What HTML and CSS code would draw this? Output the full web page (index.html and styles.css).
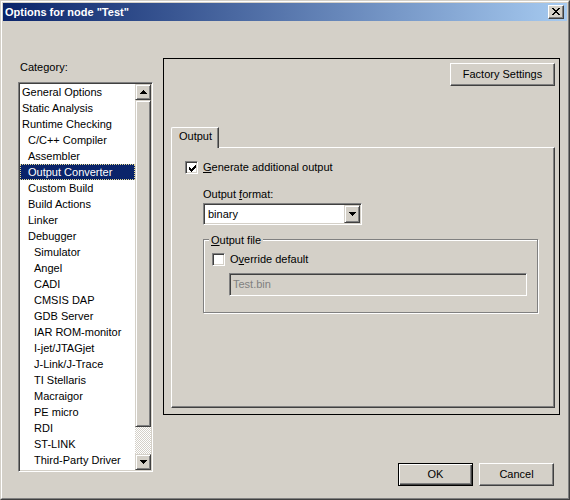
FILE: index.html
```html
<!DOCTYPE html>
<html>
<head>
<meta charset="utf-8">
<title>Options for node "Test"</title>
<link rel="stylesheet" href="styles.css">
</head>
<body>
<div class="window">
  <div class="frame">
    <div class="titlebar">
      <span class="title">Options for node "Test"</span>
      <div class="close">
        <svg width="8" height="7" viewBox="0 0 8 7" shape-rendering="crispEdges"><path fill="#000" d="M0 0h2v1h-2z M6 0h2v1h-2z M1 1h2v1h-2z M5 1h2v1h-2z M2 2h4v1h-4z M3 3h2v1h-2z M2 4h4v1h-4z M1 5h2v1h-2z M5 5h2v1h-2z M0 6h2v1h-2z M6 6h2v1h-2z"/></svg>
      </div>
    </div>
    <div class="client">
      <div class="left">
        <div class="cat-label">Category:</div>
        <div class="listbox">
          <div class="items">
            <div class="item l0">General Options</div>
            <div class="item l0">Static Analysis</div>
            <div class="item l0">Runtime Checking</div>
            <div class="item l1">C/C++ Compiler</div>
            <div class="item l1">Assembler</div>
            <div class="item l1 selected">Output Converter</div>
            <div class="item l1">Custom Build</div>
            <div class="item l1">Build Actions</div>
            <div class="item l1">Linker</div>
            <div class="item l1">Debugger</div>
            <div class="item l2">Simulator</div>
            <div class="item l2">Angel</div>
            <div class="item l2">CADI</div>
            <div class="item l2">CMSIS DAP</div>
            <div class="item l2">GDB Server</div>
            <div class="item l2">IAR ROM-monitor</div>
            <div class="item l2">I-jet/JTAGjet</div>
            <div class="item l2">J-Link/J-Trace</div>
            <div class="item l2">TI Stellaris</div>
            <div class="item l2">Macraigor</div>
            <div class="item l2">PE micro</div>
            <div class="item l2">RDI</div>
            <div class="item l2">ST-LINK</div>
            <div class="item l2">Third-Party Driver</div>
          </div>
          <div class="vscroll">
            <div class="sbtn">
              <svg width="7" height="4" viewBox="0 0 7 4" shape-rendering="crispEdges"><path fill="#000" d="M3 0h1v1h-1z M2 1h3v1h-3z M1 2h5v1h-5z M0 3h7v1h-7z"/></svg>
            </div>
            <div class="thumb"></div>
            <div class="track"></div>
            <div class="sbtn">
              <svg width="7" height="4" viewBox="0 0 7 4" shape-rendering="crispEdges"><path fill="#000" d="M0 0h7v1h-7z M1 1h5v1h-5z M2 2h3v1h-3z M3 3h1v1h-1z"/></svg>
            </div>
          </div>
        </div>
      </div>
      <div class="right">
        <div class="panel">
          <div class="panel-top">
            <div class="btn factory">Factory Settings</div>
          </div>
          <div class="tabs">
            <div class="tabstrip">
              <div class="tab">Output</div>
            </div>
            <div class="tabpage">
              <div class="check-row">
                <div class="checkbox">
                  <svg width="7" height="7" viewBox="0 0 7 7" shape-rendering="crispEdges"><path fill="#000" d="M6 0h1v1h-1z M5 1h2v1h-2z M0 2h1v1h-1z M4 2h3v1h-3z M0 3h2v1h-2z M3 3h3v1h-3z M0 4h5v1h-5z M1 5h3v1h-3z M2 6h1v1h-1z"/></svg>
                </div>
                <span class="lbl"><u>G</u>enerate additional output</span>
              </div>
              <div class="indent">
                <div class="fmt-label">Output <u>f</u>ormat:</div>
                <div class="combo">
                  <span class="combo-text">binary</span>
                  <div class="combo-btn">
                    <svg width="7" height="4" viewBox="0 0 7 4" shape-rendering="crispEdges"><path fill="#000" d="M0 0h7v1h-7z M1 1h5v1h-5z M2 2h3v1h-3z M3 3h1v1h-1z"/></svg>
                  </div>
                </div>
                <div class="group">
                  <div class="group-label"><u>O</u>utput file</div>
                  <div class="check-row override">
                    <div class="checkbox"></div>
                    <span class="lbl">O<u>v</u>erride default</span>
                  </div>
                  <div class="field">Test.bin</div>
                </div>
              </div>
            </div>
          </div>
        </div>
        <div class="footer">
          <div class="btn default">OK</div>
          <div class="btn">Cancel</div>
        </div>
      </div>
    </div>
  </div>
</div>
</body>
</html>
```

FILE: styles.css
```css
* {
  box-sizing: border-box;
}

html, body {
  margin: 0;
  padding: 0;
  background: #d4d0c8;
}

body {
  font-family: "Liberation Sans", Arial, sans-serif;
  font-size: 11px;
  line-height: 13px;
  color: #000;
}

.window {
  width: 570px;
  height: 500px;
  border: 1px solid;
  border-color: #d4d0c8 #404040 #404040 #d4d0c8;
  background: #d4d0c8;
}

.frame {
  height: 100%;
  border: 1px solid;
  border-color: #fff #808080 #808080 #fff;
  padding: 1px;
  display: flex;
  flex-direction: column;
}

.titlebar {
  height: 18px;
  flex: none;
  background: linear-gradient(to right, #0a246a, #a6caf0);
  display: flex;
  align-items: center;
  justify-content: space-between;
  padding: 0 3px 0 2px;
}

.title {
  color: #fff;
  font-weight: bold;
  font-size: 11px;
  line-height: 13px;
}

.close {
  width: 16px;
  height: 14px;
  background: #d4d0c8;
  border: 1px solid;
  border-color: #fff #404040 #404040 #fff;
  box-shadow: inset -1px -1px 0 #808080;
  display: flex;
  align-items: center;
  justify-content: center;
  padding: 0 0 1px 0;
}

.client {
  flex: 1;
  display: flex;
  padding-left: 15px;
}

.left {
  width: 135px;
  padding-top: 40px;
}

.cat-label {
  height: 13px;
  padding-left: 2px;
}

.listbox {
  margin-top: 8px;
  height: 390px;
  display: flex;
  background: #fff;
  border: 1px solid;
  border-color: #808080 #fff #fff #808080;
  box-shadow: inset 1px 1px 0 #404040, inset -1px -1px 0 #d4d0c8;
  padding: 1px;
}

.items {
  flex: 1;
  overflow: hidden;
}

.item {
  height: 16px;
  line-height: 14px;
  border: 1px solid transparent;
  white-space: nowrap;
}

.item.l0 { padding-left: 1px; }
.item.l1 { padding-left: 7px; }
.item.l2 { padding-left: 13px; }

.item.selected {
  background: #0a246a;
  color: #fff;
  border: 1px dotted #e8dc90;
}

.vscroll {
  width: 16px;
  display: flex;
  flex-direction: column;
}

.sbtn {
  height: 16px;
  flex: none;
  background: #d4d0c8;
  border: 1px solid;
  border-color: #d4d0c8 #404040 #404040 #d4d0c8;
  box-shadow: inset 1px 1px 0 #fff, inset -1px -1px 0 #808080;
  display: flex;
  align-items: center;
  justify-content: center;
}

.thumb {
  height: 327px;
  flex: none;
  background: #d4d0c8;
  border: 1px solid;
  border-color: #d4d0c8 #404040 #404040 #d4d0c8;
  box-shadow: inset 1px 1px 0 #fff, inset -1px -1px 0 #808080;
}

.track {
  flex: 1;
  background: repeating-conic-gradient(#fff 0 25%, #d4d0c8 0 50%) 0 0 / 2px 2px;
}

.right {
  margin-left: 10px;
  width: 397px;
  display: flex;
  flex-direction: column;
}

.panel {
  margin-top: 37px;
  height: 357px;
  border: 1px solid #000;
  display: flex;
  flex-direction: column;
}

.panel-top {
  display: flex;
  justify-content: flex-end;
  padding: 4px 4px 0 0;
}

.btn {
  width: 75px;
  height: 23px;
  background: #d4d0c8;
  border: 1px solid;
  border-color: #fff #404040 #404040 #fff;
  box-shadow: inset -1px -1px 0 #808080;
  display: flex;
  align-items: center;
  justify-content: center;
}

.btn.factory {
  width: 105px;
}

.btn.default {
  border: 1px solid #000;
  box-shadow: inset 1px 1px 0 #fff, inset -1px -1px 0 #404040, inset -2px -2px 0 #808080;
}

.tabs {
  margin: 41px 4px 0 7px;
}

.tabstrip {
  display: flex;
  height: 20px;
}

.tab {
  position: relative;
  z-index: 1;
  width: 48px;
  height: 21px;
  background: #d4d0c8;
  border-left: 1px solid #fff;
  border-top: 1px solid #fff;
  border-right: 1px solid #404040;
  border-top-left-radius: 2px;
  box-shadow: inset -1px 0 0 #808080;
  padding: 2px 0 0 7px;
}

.tabpage {
  height: 261px;
  border: 1px solid;
  border-color: #fff #404040 #404040 #fff;
  box-shadow: inset -1px -1px 0 #808080;
  padding: 13px 0 0 13px;
}

.check-row {
  display: flex;
  align-items: center;
  gap: 5px;
  height: 13px;
}

.checkbox {
  width: 13px;
  height: 13px;
  flex: none;
  background: #fff;
  border: 1px solid;
  border-color: #808080 #fff #fff #808080;
  box-shadow: inset 1px 1px 0 #404040, inset -1px -1px 0 #d4d0c8;
  padding: 2px 0 0 2px;
  display: flex;
}

.checkbox svg {
  display: block;
  margin: 1px 0 0 1px;
}

.lbl {
  white-space: nowrap;
}

.indent {
  margin-left: 18px;
}

.fmt-label {
  margin-top: 14px;
  height: 13px;
}

.combo {
  margin-top: 2px;
  width: 159px;
  height: 22px;
  background: #fff;
  border: 1px solid;
  border-color: #808080 #fff #fff #808080;
  box-shadow: inset 1px 1px 0 #404040, inset -1px -1px 0 #d4d0c8;
  padding: 1px;
  display: flex;
  align-items: stretch;
}

.combo-text {
  flex: 1;
  padding: 3px 0 0 3px;
}

.combo-btn {
  width: 16px;
  background: #d4d0c8;
  border: 1px solid;
  border-color: #d4d0c8 #404040 #404040 #d4d0c8;
  box-shadow: inset 1px 1px 0 #fff, inset -1px -1px 0 #808080;
  display: flex;
  align-items: center;
  justify-content: center;
}

.group {
  margin-top: 14px;
  width: 335px;
  height: 74px;
  border: 1px solid #808080;
  box-shadow: inset 1px 1px 0 #fff, 1px 1px 0 #fff;
}

.group-label {
  display: table;
  margin: -6px 0 0 5px;
  padding: 0 2px;
  background: #d4d0c8;
  height: 13px;
}

.override {
  margin: 6px 0 0 8px;
}

.field {
  margin: 7px 0 0 25px;
  width: 298px;
  height: 23px;
  background: #d4d0c8;
  color: #808080;
  border: 1px solid;
  border-color: #808080 #fff #fff #808080;
  box-shadow: inset 1px 1px 0 #404040, inset -1px -1px 0 #d4d0c8;
  padding: 4px 0 0 3px;
}

.footer {
  margin-top: 48px;
  display: flex;
  justify-content: flex-end;
  gap: 6px;
  padding-right: 6px;
}
```
